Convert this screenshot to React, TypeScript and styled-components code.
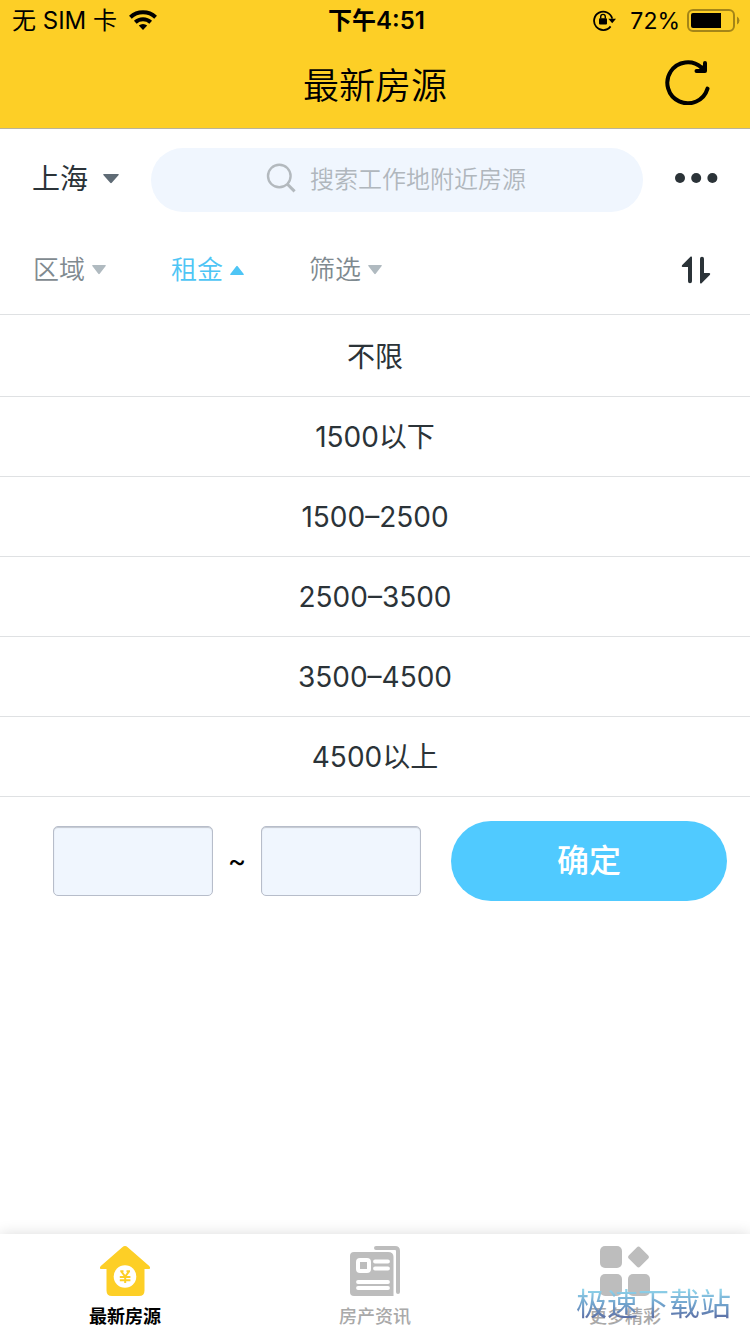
import React, { useState } from "react";
import styled, { createGlobalStyle } from "styled-components";

const GlobalStyle = createGlobalStyle`
  *, *::before, *::after { box-sizing: border-box; }
  body {
    margin: 0;
    background: #fff;
    color: #2b3338;
    font-family: Inter, "Noto Sans CJK SC", sans-serif;
    font-weight: 400;
  }
  button, input {
    font-family: inherit;
    font-weight: inherit;
    color: inherit;
  }
  button {
    padding: 0;
    border: 0;
    background: none;
    cursor: pointer;
  }
  svg { display: block; flex: none; }
`;

const Page = styled.div`
  display: flex;
  flex-direction: column;
  min-height: 100vh;
`;

const Header = styled.header`
  background: #fdcf26;
  border-bottom: 1px solid #b9b39a;
  color: #000;
`;

const StatusBar = styled.div`
  display: grid;
  grid-template-columns: 1fr auto 1fr;
  align-items: center;
  height: 40px;
  padding: 0 9px 0 12px;
  font-size: 24px;
  line-height: 32px;
`;

const StatusGroup = styled.div<{ $end?: boolean }>`
  display: flex;
  align-items: center;
  justify-content: ${(p) => (p.$end ? "flex-end" : "flex-start")};
  gap: ${(p) => (p.$end ? 7 : 12)}px;
`;

const StatusText = styled.span`
  padding-top: 2px;
`;

const Percent = styled(StatusText)`
  margin-left: 7px;
  font-size: 23px;
`;

const Clock = styled.time`
  padding-top: 2px;
  font-weight: 600;
`;

const TitleBar = styled.div`
  display: grid;
  grid-template-columns: 1fr auto 1fr;
  align-items: center;
  height: 88px;
  padding: 0 40px;
`;

const Title = styled.h1`
  grid-column: 2;
  margin: 0;
  padding-top: 4px;
  font-size: 36px;
  line-height: 48px;
  font-weight: 350;
`;

const RefreshButton = styled.button`
  justify-self: end;
  padding-bottom: 4px;
`;

const SearchRow = styled.div`
  display: flex;
  align-items: center;
  gap: 32px;
  padding: 19px 32px 0;
`;

const CityButton = styled.button`
  display: flex;
  align-items: center;
  gap: 15px;
  padding-bottom: 2px;
  font-size: 28px;
  line-height: 40px;
  svg { color: #5f6b75; }
`;

const MoreButton = styled.button`
  padding-bottom: 4px;
`;

const SearchBox = styled.label`
  flex: 1;
  display: flex;
  align-items: center;
  justify-content: center;
  gap: 14px;
  height: 64px;
  padding: 0 2px 4px 0;
  border-radius: 32px;
  background: #f0f6fe;
`;

const SearchInput = styled.input`
  width: 9em;
  height: 38px;
  padding: 2px 0 0;
  border: 0;
  outline: 0;
  background: none;
  font-size: 24px;
  line-height: 36px;
  font-weight: 350;
  &::placeholder { color: #b0b7bd; opacity: 1; }
`;

const FilterRow = styled.div`
  display: flex;
  align-items: center;
  gap: 65px;
  height: 102px;
  padding: 14px 39px 0 33px;
`;

const FilterButton = styled.button<{ $active: boolean }>`
  display: flex;
  align-items: center;
  gap: 7px;
  font-size: 26px;
  line-height: 40px;
  font-weight: 350;
  color: ${(p) => (p.$active ? "#4ec5f5" : "#7f8a90")};
  svg { color: ${(p) => (p.$active ? "#4ec5f5" : "#b0bac0")}; }
`;

const SortButton = styled.button`
  margin-left: auto;
`;

const OptionList = styled.ul`
  margin: 0;
  padding: 2px 0 0;
  list-style: none;
  border-top: 1px solid #dfe1e3;
`;

const OptionItem = styled.li`
  border-bottom: 1px solid #dfe1e3;
`;

const OptionButton = styled.button`
  display: block;
  width: 100%;
  height: 79px;
  font-size: 28px;
  line-height: 40px;
`;

const RangeForm = styled.form`
  display: grid;
  grid-template-columns: 160fr 48px 160fr 30px 276fr;
  align-items: center;
  padding: 24px 23px 24px 53px;
`;

const RangeInput = styled.input`
  min-width: 0;
  height: 70px;
  padding: 0 12px;
  border: 1px solid #b7bdca;
  border-radius: 5px;
  outline: 0;
  background: #f0f6fe;
  box-shadow: inset 0 1px 1px #c3c8d0;
  font-size: 28px;
`;

const Tilde = styled.span`
  text-align: center;
  font-size: 28px;
  line-height: 32px;
  color: #000;
`;

const SubmitButton = styled.button`
  grid-column: 5;
  height: 80px;
  border-radius: 40px;
  background: #50caff;
  color: #fff;
  font-size: 32px;
  line-height: 48px;
  font-weight: 500;
`;

const TabBar = styled.nav`
  position: relative;
  display: grid;
  grid-template-columns: repeat(3, 1fr);
  height: 100px;
  margin-top: auto;
  background: #fff;
  box-shadow: 0 0 14px rgba(0, 0, 0, 0.14);
`;

const Tab = styled.a<{ $active?: boolean }>`
  display: flex;
  flex-direction: column;
  align-items: center;
  gap: 9px;
  padding-top: 12px;
  font-size: 18px;
  line-height: 24px;
  font-weight: ${(p) => (p.$active ? 700 : 500)};
  color: ${(p) => (p.$active ? "#000" : "#a9a9a9")};
  text-decoration: none;
  svg { color: ${(p) => (p.$active ? "#fdcf26" : "#bdbdbd")}; }
`;

const Watermark = styled.span`
  position: absolute;
  right: 19px;
  bottom: 10px;
  font-size: 31px;
  line-height: 40px;
  color: transparent;
  background: linear-gradient(#8fd3ea 15%, #6d9cc8 55%, #5a69a0 90%);
  background-clip: text;
  -webkit-background-clip: text;
  pointer-events: none;
`;

const WifiIcon = () => (
  <svg width="28" height="20" viewBox="0 0 28 20" fill="none" stroke="#000" strokeWidth="4">
    <path d="M1.4 7.2A18.5 18.5 0 0 1 26.6 7.2" />
    <path d="M6.3 12.3A11.4 11.4 0 0 1 21.7 12.3" />
    <path d="M14 20L9.8 15.6A6 6 0 0 1 18.2 15.6Z" fill="#000" stroke="none" />
  </svg>
);

const LockIcon = () => (
  <svg width="23" height="22" viewBox="0 0 23 22" fill="none" stroke="#000">
    <path d="M17.6 17.4A9.2 9.2 0 1 1 19.2 9.6" strokeWidth="1.8" />
    <path d="M15.3 9.8H23L19.2 14.2Z" fill="#000" stroke="none" />
    <rect x="6" y="9.3" width="8" height="6.2" rx="1" fill="#000" stroke="none" />
    <path d="M7.7 9.5V7.7a2.3 2.3 0 0 1 4.6 0V9.5" strokeWidth="1.4" />
  </svg>
);

const BatteryIcon = () => (
  <svg width="54" height="24" viewBox="0 0 54 24">
    <rect x="1" y="2" width="46" height="21" rx="5" fill="none" stroke="#a48518" strokeWidth="2" />
    <path d="M50 8.500a4.500 4.500 0 0 1 0 8Z" fill="#a48518" />
    <path d="M6 5H34V20H6a2 2 0 0 1-2-2V7a2 2 0 0 1 2-2Z" fill="#000" />
  </svg>
);

const RefreshIcon = () => (
  <svg width="46" height="46" viewBox="0 0 46 46" fill="none" stroke="#000" strokeWidth="4" strokeLinecap="round" strokeLinejoin="round">
    <path d="M43.5 29.6A20.500 20.500 0 1 1 37.500 8.500" />
    <path d="M41 4V12H32.500" />
    <path d="M40 6V11H35Z" fill="#000" strokeWidth="1" />
  </svg>
);

const Triangle = ({ up, wide }: { up?: boolean; wide?: boolean }) => (
  <svg
    width={wide ? 16 : 14}
    height="10"
    viewBox="0 0 14 10"
    preserveAspectRatio="none"
    fill="currentColor"
  >
    <path d={up ? "M.7 10Q-.3 9.7.5 8.8L6.3 1.2Q7 .4 7.7 1.2L13.5 8.8Q14.3 9.7 13.3 10Z" : "M.7 0Q-.3.3.5 1.2L6.3 8.8Q7 9.6 7.7 8.8L13.5 1.2Q14.3.3 13.3 0Z"} />
  </svg>
);

const SearchIcon = () => (
  <svg width="30" height="30" viewBox="0 0 30 30" fill="none" stroke="#b3b9be" strokeWidth="2.4">
    <circle cx="13.3" cy="13" r="11.3" />
    <path d="M21.2 21L28.6 28.4" strokeWidth="3" />
  </svg>
);

const MoreIcon = () => (
  <svg width="43" height="10" viewBox="0 0 43 10" fill="#2b3338">
    <circle cx="5" cy="5" r="5" />
    <circle cx="21.2" cy="5" r="5" />
    <circle cx="37.4" cy="5" r="5" />
  </svg>
);

const SortIcon = () => (
  <svg width="30" height="28" viewBox="0 0 30 28" fill="#2b3338">
    <path d="M1 9.2L9.7.6Q11 0 11 1.4V25.2a2 2 0 0 1-4 0V11H1.6Q.2 10.6 1 9.2Z" />
    <path d="M29 18.8L20.3 27.4Q19 28 19 26.6V2.8a2 2 0 0 1 4 0V17H28.4Q29.8 17.4 29 18.8Z" />
  </svg>
);

const HouseIcon = () => (
  <svg width="50" height="50" viewBox="1 0 50 50">
    <path
      d="M23.3 1.2Q26-1 28.7 1.2L50.2 20Q52.6 23 49 23H45.5V44.500Q45.500 50 40 50H13Q7.500 50 7.500 44.500V23H3Q-.6 23 1.800 20Z"
      fill="currentColor"
    />
    <circle cx="26" cy="30.500" r="11.300" fill="#fff" />
    <path
      d="M21.300 25.200H24.500M27.500 25.200H31M22.300 25.500L26.200 30.500L30 25.500M20.800 31H31.400M20.800 34.300H31.400M26.200 30.500V37"
      fill="none"
      stroke="currentColor"
      strokeWidth="2"
    />
  </svg>
);

const NewsIcon = () => (
  <svg width="50" height="50" viewBox="0 0 50 50">
    <path d="M26 2H45Q48 2 48 5V46" fill="none" stroke="currentColor" strokeWidth="4" strokeLinecap="round" />
    <path d="M4 6H38Q43.500 6 43.500 11V50H4Q0 50 0 46V10Q0 6 4 6Z" fill="currentColor" />
    <rect x="8" y="14" width="11" height="11" rx="2" fill="none" stroke="#fff" strokeWidth="4" />
    <path d="M25 15.500H38M25 22.500H38M8 36H38M8 42H38" stroke="#fff" strokeWidth="3.800" strokeLinecap="round" />
  </svg>
);

const GridIcon = () => (
  <svg width="50" height="50" viewBox="0 0 50 50" fill="currentColor">
    <rect width="22" height="22" rx="5" />
    <rect y="28" width="22" height="22" rx="5" />
    <rect x="28" y="28" width="22" height="22" rx="5" />
    <rect x="30.500" y="3" width="16" height="16" rx="2.500" transform="rotate(45 38.500 11)" />
  </svg>
);

const filters = ["区域", "租金", "筛选"];
const priceOptions = ["不限", "1500以下", "1500–2500", "2500–3500", "3500–4500", "4500以上"];

export default function App() {
  const [open, setOpen] = useState("租金");

  return (
    <Page>
      <GlobalStyle />
      <Header>
        <StatusBar>
          <StatusGroup>
            <StatusText>无 SIM 卡</StatusText>
            <WifiIcon />
          </StatusGroup>
          <Clock>下午4:51</Clock>
          <StatusGroup $end>
            <LockIcon />
            <Percent>72%</Percent>
            <BatteryIcon />
          </StatusGroup>
        </StatusBar>
        <TitleBar>
          <Title>最新房源</Title>
          <RefreshButton type="button" aria-label="刷新">
            <RefreshIcon />
          </RefreshButton>
        </TitleBar>
      </Header>

      <main>
        <SearchRow>
          <CityButton type="button">
            上海
            <Triangle wide />
          </CityButton>
          <SearchBox>
            <SearchIcon />
            <SearchInput type="text" aria-label="搜索" placeholder="搜索工作地附近房源" />
          </SearchBox>
          <MoreButton type="button" aria-label="更多">
            <MoreIcon />
          </MoreButton>
        </SearchRow>

        <FilterRow>
          {filters.map((name) => (
            <FilterButton
              key={name}
              type="button"
              $active={open === name}
              aria-expanded={open === name}
              onClick={() => setOpen(name)}
            >
              {name}
              <Triangle up={open === name} />
            </FilterButton>
          ))}
          <SortButton type="button" aria-label="排序">
            <SortIcon />
          </SortButton>
        </FilterRow>

        <OptionList>
          {priceOptions.map((label) => (
            <OptionItem key={label}>
              <OptionButton type="button">{label}</OptionButton>
            </OptionItem>
          ))}
        </OptionList>

        <RangeForm onSubmit={(e) => e.preventDefault()}>
          <RangeInput type="text" inputMode="numeric" aria-label="最低租金" />
          <Tilde>~</Tilde>
          <RangeInput type="text" inputMode="numeric" aria-label="最高租金" />
          <SubmitButton type="submit">确定</SubmitButton>
        </RangeForm>
      </main>

      <TabBar>
        <Tab href="#listings" $active aria-current="page">
          <HouseIcon />
          最新房源
        </Tab>
        <Tab href="#news">
          <NewsIcon />
          房产资讯
        </Tab>
        <Tab href="#more">
          <GridIcon />
          更多精彩
        </Tab>
        <Watermark>极速下载站</Watermark>
      </TabBar>
    </Page>
  );
}
